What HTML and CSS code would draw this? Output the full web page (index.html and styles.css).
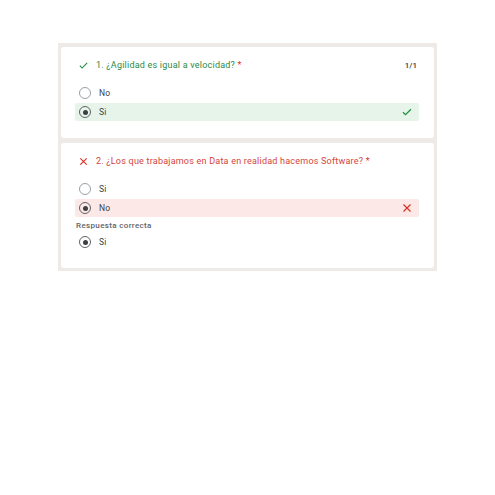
FILE: index.html
```html
<!DOCTYPE html>
<html>
<head>
  <meta charset="utf-8">
  <title>Respuestas</title>
  <link rel="stylesheet" href="styles.css">
</head>
<body>
  <div class="frame">
    <div class="card">
      <div class="q-head">
        <svg class="q-icon" viewBox="0 0 24 24"><path d="M4 12.5l5 5L20 6.5" fill="none" stroke="#1e8e3e" stroke-width="2.4"/></svg>
        <span class="q-title ok">1. ¿Agilidad es igual a velocidad? <span class="req">*</span></span>
        <span class="score">1/1</span>
      </div>
      <div class="opt">
        <span class="radio"></span><span class="label">No</span>
      </div>
      <div class="opt right">
        <span class="radio on"></span><span class="label">Si</span>
        <svg class="mark" viewBox="0 0 24 24"><path d="M4 12.5l5 5L20 6.5" fill="none" stroke="#1e8e3e" stroke-width="2.4"/></svg>
      </div>
    </div>

    <div class="card">
      <div class="q-head">
        <svg class="q-icon" viewBox="0 0 24 24"><path d="M5 5l14 14M19 5L5 19" fill="none" stroke="#d93025" stroke-width="2.4"/></svg>
        <span class="q-title bad">2. ¿Los que trabajamos en Data en realidad hacemos Software? <span class="req">*</span></span>
      </div>
      <div class="opt">
        <span class="radio"></span><span class="label">Si</span>
      </div>
      <div class="opt wrong">
        <span class="radio on"></span><span class="label">No</span>
        <svg class="mark" viewBox="0 0 24 24"><path d="M5 5l14 14M19 5L5 19" fill="none" stroke="#d93025" stroke-width="2.4"/></svg>
      </div>
      <div class="correct-label">Respuesta correcta</div>
      <div class="opt">
        <span class="radio on"></span><span class="label">Si</span>
      </div>
    </div>
  </div>
</body>
</html>
```

FILE: styles.css
```css
* {
  box-sizing: border-box;
}

body {
  margin: 0;
  padding: 43px 0 0 58px;
  font-family: Roboto, Arial, sans-serif;
  background: #fff;
  color: #3c4043;
}

.frame {
  width: 379px;
  background: #eeeae7;
  padding: 4px 3px 3px 3px;
  display: flex;
  flex-direction: column;
  gap: 5px;
}

.card {
  background: #fff;
  border-radius: 3px;
  padding: 11px 15px 17px 14px;
  display: flex;
  flex-direction: column;
  gap: 1px;
}

.q-head {
  display: flex;
  align-items: center;
  height: 14px;
  margin-bottom: 11px;
  padding-left: 3px;
}

.q-icon {
  width: 11px;
  height: 11px;
  margin-right: 7px;
}

.q-title {
  font-size: 9px;
  letter-spacing: 0.22px;
  flex: 1;
}

.q-title.ok { color: #2b8a46; }
.q-title.bad { color: #d5443a; }

.req { color: #d93025; }

.score {
  font-size: 8px;
  font-weight: 500;
  color: #3c4043;
  margin-right: 2px;
}

.opt {
  display: flex;
  align-items: center;
  height: 18px;
  padding-left: 4px;
  border-radius: 2px;
}

.opt.right { background: #e6f4ea; }
.opt.wrong { background: #fce8e6; }

.radio {
  width: 12px;
  height: 12px;
  border: 1.3px solid #9aa0a6;
  border-radius: 50%;
  margin-right: 8px;
  display: flex;
  align-items: center;
  justify-content: center;
}

.radio.on {
  border-color: #5f6368;
}

.radio.on::after {
  content: "";
  width: 5px;
  height: 5px;
  border-radius: 50%;
  background: #3c4043;
}

.label {
  font-size: 8.5px;
  letter-spacing: 0.2px;
  flex: 1;
}

.mark {
  width: 12px;
  height: 12px;
  margin-right: 6px;
}

.correct-label {
  font-size: 8px;
  font-weight: 500;
  letter-spacing: 0.35px;
  color: #5f6368;
  margin: 3px 0 2px 1px;
}
```
